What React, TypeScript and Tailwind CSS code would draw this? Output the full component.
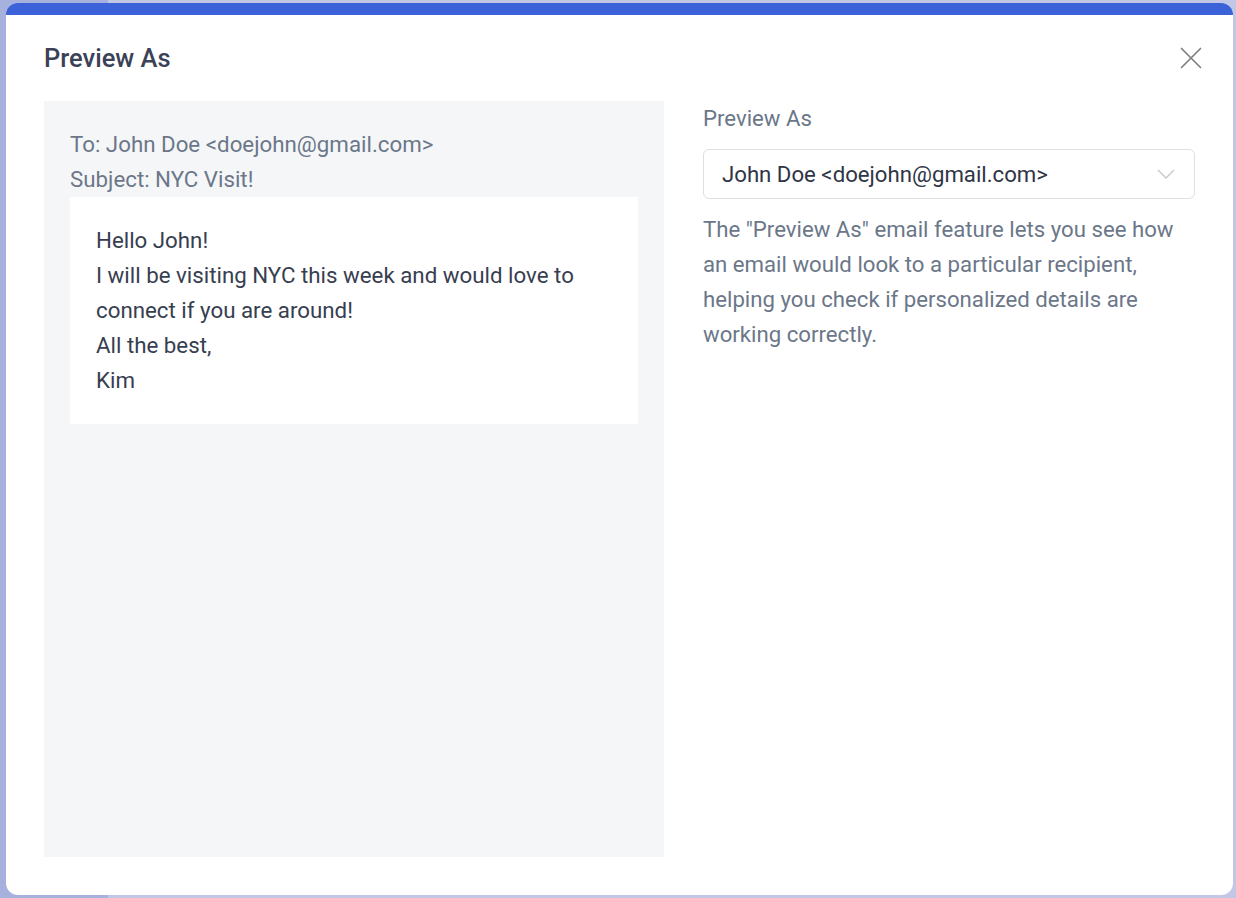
import React from "react";

const body = { fontFamily: "Roboto, 'Liberation Sans', sans-serif" };

function CloseIcon() {
  return (
    <svg width="22" height="22" viewBox="0 0 22 22" fill="none" stroke="#7d7f83" strokeWidth="1.7" strokeLinecap="round">
      <path d="M1.5 1.5 L20.5 20.5 M20.5 1.5 L1.5 20.5" />
    </svg>
  );
}

function Chevron() {
  return (
    <svg width="18" height="10" viewBox="0 0 18 10" fill="none" stroke="#c3c7ce" strokeWidth="1.3">
      <path d="M1 1 L9 9 L17 1" />
    </svg>
  );
}

export default function App() {
  return (
    <div className="relative h-[898px] w-full overflow-hidden bg-[#c2c7e6]" style={body}>
      {/* page behind the overlay */}
      <div className="flex h-full">
        <div className="w-[108px] bg-[#a6b1dd]" />
        <div className="flex-1" />
      </div>

      {/* modal */}
      <div className="absolute left-[6px] top-[3px] flex h-[892px] w-[1227px] flex-col overflow-hidden rounded-[12px] border-t-[12px] border-[#3b62d8] bg-white">
        <div className="flex h-[86px] shrink-0 items-center justify-between pl-[38px] pr-[26px]">
          <h2 className="text-[25.5px] font-medium leading-8 text-[#3b4256]">Preview As</h2>
          <button className="flex h-8 w-8 items-center justify-center">
            <CloseIcon />
          </button>
        </div>

        <div className="flex min-h-0 flex-1 gap-[39px] px-[38px] pb-[38px]">
          {/* email preview */}
          <div className="w-[620px] shrink-0 bg-[#f5f6f8] px-[26px] pt-[26px] text-[22.3px] leading-[35px]">
            <p className="text-[#6b7789]">To: John Doe &lt;doejohn@gmail.com&gt;</p>
            <p className="text-[#6b7789]">Subject: NYC Visit!</p>
            <div className="bg-white px-[26px] py-[26px] text-[#373e50]">
              <p>Hello John!</p>
              <p>I will be visiting NYC this week and would love to connect if you are around!</p>
              <p>All the best,</p>
              <p>Kim</p>
            </div>
          </div>

          {/* recipient picker */}
          <div className="flex-1 text-[22.2px] leading-[35px]">
            <label className="block text-[#6b7789]">Preview As</label>
            <div className="mt-[13px] flex h-[50px] items-center justify-between rounded-[6px] border border-[#dcdfe4] pl-[18px] pr-[19px] text-[#2f3546]">
              <span>John Doe &lt;doejohn@gmail.com&gt;</span>
              <Chevron />
            </div>
            <p className="mt-[13px] text-[#6b7789]">
              The "Preview As" email feature lets you see how an email would look to a particular recipient,
              helping you check if personalized details are working correctly.
            </p>
          </div>
        </div>
      </div>
    </div>
  );
}
